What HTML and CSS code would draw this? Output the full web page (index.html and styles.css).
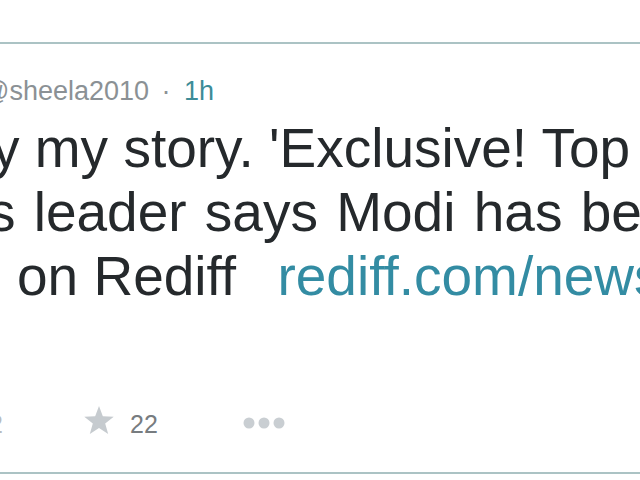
FILE: index.html
```html
<!DOCTYPE html>
<html lang="en">

<head>
	<meta charset="UTF-8">
	<meta name="viewport" content="width=device-width, initial-scale=1.0">
	<title>Tweet</title>
	<link rel="stylesheet" href="styles.css">
</head>

<body>
	<div class="prev-tweet"></div>

	<div class="tweet">
		<div class="tweet-header">
			<span class="handle">@sheela2010</span>
			<span class="sep">·</span>
			<span class="time">1h</span>
		</div>

		<div class="tweet-text">
			<div class="line line-1">y my story. 'Exclusive! Top</div>
			<div class="line line-2">Congress leader says Modi has been</div>
			<div class="line line-3">on Rediff <a class="link" href="#">rediff.com/news/report</a></div>
		</div>

		<div class="actions">
			<span class="rt-count">12</span>
			<span class="fav">
				<svg class="star" width="32" height="32" viewBox="0 0 30 30">
					<path d="M15 1 L18.6 10.6 L28.8 11 L20.8 17.4 L23.6 27.3 L15 21.6 L6.4 27.3 L9.2 17.4 L1.2 11 L11.4 10.6 Z" fill="#c6cbcf"/>
				</svg>
				<span class="fav-count">22</span>
			</span>
			<span class="more">
				<svg width="42" height="12" viewBox="0 0 42 12">
					<circle cx="6" cy="6" r="5.5" fill="#c9ced2"/>
					<circle cx="21" cy="6" r="5.5" fill="#c9ced2"/>
					<circle cx="36" cy="6" r="5.5" fill="#c9ced2"/>
				</svg>
			</span>
		</div>
	</div>
</body>

</html>
```

FILE: styles.css
```css
html,
body {
	margin: 0;
	padding: 0;
	overflow: hidden;
	background-color: #ffffff;
}

body {
	width: 640px;
	height: 480px;
	font-family: "Liberation Sans", Arial, sans-serif;
}

.prev-tweet {
	height: 42px;
	border-bottom: 2px solid #abc3c4;
}

.tweet {
	padding-top: 31px;
	padding-bottom: 33px;
	border-bottom: 2px solid #abc3c4;
}

.tweet-header {
	margin-left: -18px;
	font-size: 27px;
	line-height: 32px;
	white-space: nowrap;
	color: #8b9195;
}

.sep {
	margin: 0 6px 0 5px;
}

.time {
	color: #3d8c98;
}

.tweet-text {
	margin-top: 9px;
	font-size: 55px;
	line-height: 64px;
	color: #25292c;
	white-space: nowrap;
}

.line-1 {
	margin-left: -8px;
}

.line-2 {
	margin-left: -220px;
	word-spacing: 3px;
}

.line-3 {
	margin-left: 17px;
}

.link {
	margin-left: 26px;
	color: #338ca3;
	text-decoration: none;
}

.actions {
	display: flex;
	align-items: center;
	height: 30px;
	margin-top: 101px;
	margin-left: -25px;
	font-size: 25px;
	line-height: 30px;
	color: #777c80;
}

.rt-count {
	width: 28px;
	text-align: right;
	color: #b8bcbf;
}

.fav {
	display: flex;
	align-items: center;
	margin-left: 80px;
}

.star {
	margin-top: -6px;
}

.fav-count {
	margin-left: 15px;
}

.more {
	display: flex;
	margin-left: 85px;
	margin-top: -2px;
}
```
